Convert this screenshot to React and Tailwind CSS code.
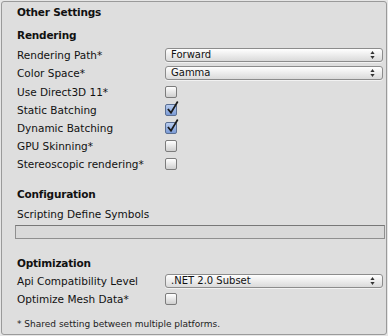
import React from 'react';

const font = { fontFamily: '"DejaVu Sans", Verdana, sans-serif' };

const Arrows = () => (
  <svg width="5" height="9" viewBox="0 0 5 9" className="absolute right-[7px] top-1/2 -translate-y-1/2">
    <path d="M2.5 0.5 L4.6 3.6 L0.4 3.6 Z" fill="#333" />
    <path d="M2.5 8.5 L4.6 5.4 L0.4 5.4 Z" fill="#333" />
  </svg>
);

const Dropdown = ({ value }) => (
  <div className="relative w-[218px] h-[14px] rounded-[3px] border border-[#8c8c8c] bg-gradient-to-b from-[#ffffff] to-[#dadada] shadow-[0_1px_0_rgba(255,255,255,0.6)] flex items-center pl-[5px] text-[10px] leading-none text-[#111]">
    {value}
    <Arrows />
  </div>
);

const Checkbox = ({ checked }) => (
  <div
    className={
      'relative w-[12px] h-[12px] rounded-[2px] border ' +
      (checked
        ? 'border-[#5a6f93] bg-gradient-to-b from-[#b9cdef] to-[#7b9bd6]'
        : 'border-[#7c7c7c] bg-gradient-to-b from-[#ffffff] to-[#cfcfcf]')
    }
  >
    {checked && (
      <svg width="13" height="14" viewBox="0 0 13 14" className="absolute left-[0px] top-[-4px]">
        <path d="M2.4 8.6 L5 11.8 L11.3 1.2" stroke="#1b1b1b" strokeWidth="1.7" fill="none" strokeLinecap="square" />
      </svg>
    )}
  </div>
);

const Row = ({ label, children, className = '' }) => (
  <div className={'flex items-center h-[18px] ' + className}>
    <div className="w-[163px] pl-[15px] text-[10.5px] leading-none text-[#111] whitespace-nowrap">{label}</div>
    <div className="flex items-center">{children}</div>
  </div>
);

const Header = ({ children, className = '' }) => (
  <div className={'h-[18px] flex items-center pl-[15px] text-[10.5px] font-bold leading-none text-[#111] tracking-[-0.2px] ' + className}>
    {children}
  </div>
);

export default function App() {
  return (
    <div className="w-[388px] h-[336px] bg-[#e6e6e6] p-px" style={font}>
      <div className="w-[386px] h-[334px] rounded-[3px] border border-[#9a9a9a] bg-[#dedede] pt-px">
        <Header>Other Settings</Header>
        <Header className="mt-[5px]">Rendering</Header>
        <Row label="Rendering Path*" className="mt-[2px]"><Dropdown value="Forward" /></Row>
        <Row label="Color Space*"><Dropdown value="Gamma" /></Row>
        <Row label="Use Direct3D 11*" className="mt-px"><Checkbox /></Row>
        <Row label="Static Batching"><Checkbox checked /></Row>
        <Row label="Dynamic Batching"><Checkbox checked /></Row>
        <Row label="GPU Skinning*"><Checkbox /></Row>
        <Row label="Stereoscopic rendering*"><Checkbox /></Row>

        <Header className="mt-[12px]">Configuration</Header>
        <div className="h-[18px] mt-[2px] flex items-center pl-[15px] text-[10.5px] leading-none text-[#111]">
          Scripting Define Symbols
        </div>
        <div className="ml-[13px] mt-[2px] w-[370px] h-[14px] border border-[#8f8f8f] border-t-[#777] bg-[#d9d9d9]" />

        <Header className="mt-[15px]">Optimization</Header>
        <Row label="Api Compatibility Level"><Dropdown value=".NET 2.0 Subset" /></Row>
        <Row label="Optimize Mesh Data*"><Checkbox /></Row>

        <div className="mt-[9px] h-[14px] flex items-center pl-[15px] text-[9px] leading-none text-[#222] whitespace-nowrap">
          * Shared setting between multiple platforms.
        </div>
      </div>
    </div>
  );
}
